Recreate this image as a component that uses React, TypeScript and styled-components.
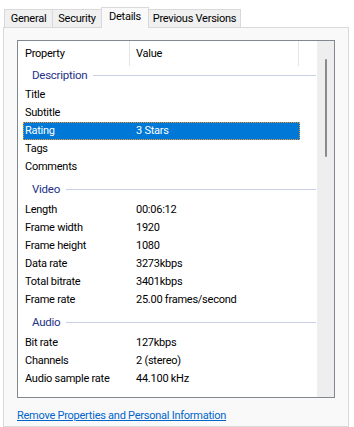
import React from 'react'
import styled, { createGlobalStyle } from 'styled-components'

const GlobalStyle = createGlobalStyle`
  html, body {
    margin: 0;
    padding: 0;
    background: #ffffff;
  }
  body {
    font-family: Roboto, "Liberation Sans", sans-serif;
    font-size: 11px;
    letter-spacing: -0.25px;
    color: #000000;
  }
`

const Window = styled.div`
  width: 354px;
  height: 427px;
  overflow: hidden;
  background: #ffffff;
  display: flex;
  flex-direction: column;
`

const TabStrip = styled.div`
  display: flex;
  align-items: flex-end;
  height: 27px;
  padding-left: 4px;
  flex-shrink: 0;
`

const Tab = styled.div<{ $w: number; $active?: boolean }>`
  width: ${p => p.$w}px;
  height: ${p => (p.$active ? 21 : 18)}px;
  margin-bottom: ${p => (p.$active ? -1 : 0)}px;
  margin-left: -1px;
  box-sizing: border-box;
  border: 1px solid #d9d9d9;
  border-bottom: none;
  background: ${p => (p.$active ? '#f9f9f9' : '#f0f0f0')};
  display: flex;
  align-items: center;
  justify-content: center;
  padding-bottom: ${p => (p.$active ? 3 : 0)}px;
  white-space: nowrap;
  position: relative;
  z-index: ${p => (p.$active ? 2 : 0)};
  color: #000;
  &:first-child {
    margin-left: 0;
  }
`

const Panel = styled.div`
  flex: 1;
  margin-left: 3px;
  width: 346px;
  box-sizing: border-box;
  border: 1px solid #d9d9d9;
  background: #f9f9f9;
  padding: 12px 0 0 13px;
  display: flex;
  flex-direction: column;
`

const ListView = styled.div`
  width: 318px;
  height: 358px;
  box-sizing: border-box;
  border: 1px solid #828790;
  background: #ffffff;
  display: flex;
  flex-shrink: 0;
`

const Content = styled.div`
  flex: 1;
  overflow: hidden;
  display: flex;
  flex-direction: column;
`

const Header = styled.div`
  display: flex;
  height: 25px;
  flex-shrink: 0;
`

const HeaderCell = styled.div<{ $w: number; $pad: number }>`
  width: ${p => p.$w}px;
  box-sizing: border-box;
  padding-left: ${p => p.$pad}px;
  padding-top: 5px;
  border-right: 1px solid #e5e5e5;
  line-height: 16px;
`

const GroupHeader = styled.div<{ $first?: boolean }>`
  display: flex;
  align-items: center;
  margin-left: 5px;
  width: 284px;
  height: 18px;
  padding: ${p => (p.$first ? '0 0 2px 9px' : '4px 0 3px 9px')};
  flex-shrink: 0;
  color: #1e3287;
  font-size: 11.5px;
  line-height: 18px;
`

const GroupRule = styled.div`
  flex: 1;
  height: 1px;
  margin-left: 6px;
  background: #c9cfe4;
`

const Row = styled.div<{ $selected?: boolean }>`
  display: grid;
  grid-template-columns: 113px 1fr;
  margin-left: 5px;
  width: 277px;
  height: 18px;
  line-height: 18px;
  flex-shrink: 0;
  white-space: nowrap;
  background: ${p => (p.$selected ? '#0078d7' : 'transparent')};
  color: ${p => (p.$selected ? '#ffffff' : '#000000')};
  outline: ${p => (p.$selected ? '1px dotted #f39a2b' : 'none')};
  outline-offset: -1px;
`

const Label = styled.span`
  padding-left: 2px;
`

const Value = styled.span``

const Scrollbar = styled.div`
  width: 17px;
  flex-shrink: 0;
  background: #eeeeee;
  display: flex;
  flex-direction: column;
  align-items: center;
  padding-top: 18px;
  box-sizing: border-box;
`

const Thumb = styled.div`
  width: 2px;
  height: 98px;
  border-radius: 1px;
  background: #8a8a8a;
`

const RemoveLink = styled.a`
  margin-top: 10px;
  line-height: 16px;
  color: #0066cc;
  text-decoration: underline;
  cursor: pointer;
  align-self: flex-start;
`

type Item = { label: string; value?: string; selected?: boolean }
type Group = { title: string; items: Item[] }

const groups: Group[] = [
  {
    title: 'Description',
    items: [
      { label: 'Title' },
      { label: 'Subtitle' },
      { label: 'Rating', value: '3 Stars', selected: true },
      { label: 'Tags' },
      { label: 'Comments' },
    ],
  },
  {
    title: 'Video',
    items: [
      { label: 'Length', value: '00:06:12' },
      { label: 'Frame width', value: '1920' },
      { label: 'Frame height', value: '1080' },
      { label: 'Data rate', value: '3273kbps' },
      { label: 'Total bitrate', value: '3401kbps' },
      { label: 'Frame rate', value: '25.00 frames/second' },
    ],
  },
  {
    title: 'Audio',
    items: [
      { label: 'Bit rate', value: '127kbps' },
      { label: 'Channels', value: '2 (stereo)' },
      { label: 'Audio sample rate', value: '44.100 kHz' },
    ],
  },
  // only the top of this header shows above the list's lower edge
  { title: 'Media', items: [] },
]

const tabs = [
  { name: 'General', w: 49 },
  { name: 'Security', w: 50 },
  { name: 'Details', w: 48, active: true },
  { name: 'Previous Versions', w: 93 },
]

const App = () => {
  return (
    <Window>
      <GlobalStyle />
      <TabStrip>
        {tabs.map(t => (
          <Tab key={t.name} $w={t.w} $active={t.active}>
            {t.name}
          </Tab>
        ))}
      </TabStrip>
      <Panel>
        <ListView>
          <Content>
            <Header>
              <HeaderCell $w={112} $pad={7}>Property</HeaderCell>
              <HeaderCell $w={169} $pad={6}>Value</HeaderCell>
            </Header>
            {groups.map((g, gi) => (
              <React.Fragment key={g.title}>
                <GroupHeader $first={gi === 0}>
                  {g.title}
                  <GroupRule />
                </GroupHeader>
                {g.items.map(it => (
                  <Row key={it.label} $selected={it.selected}>
                    <Label>{it.label}</Label>
                    <Value>{it.value ?? ''}</Value>
                  </Row>
                ))}
              </React.Fragment>
            ))}
          </Content>
          <Scrollbar>
            <Thumb />
          </Scrollbar>
        </ListView>
        <RemoveLink>Remove Properties and Personal Information</RemoveLink>
      </Panel>
    </Window>
  )
}

export default App
